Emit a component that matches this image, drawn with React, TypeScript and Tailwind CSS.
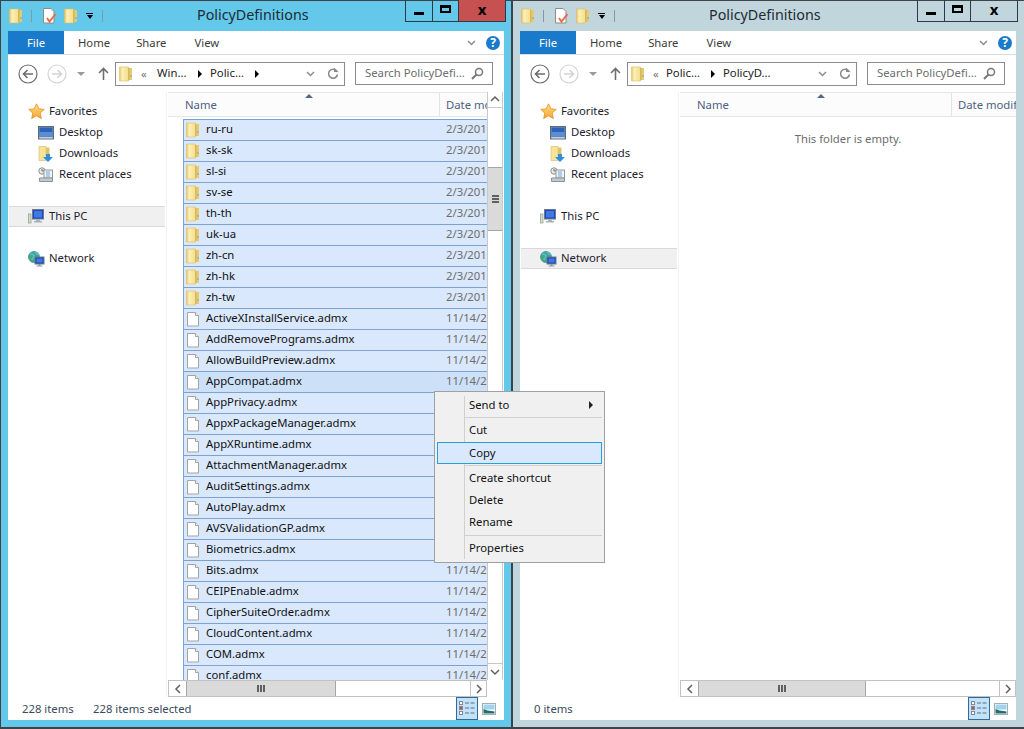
import type { ReactNode } from 'react'

const folderRows = ['ru-ru', 'sk-sk', 'sl-si', 'sv-se', 'th-th', 'uk-ua', 'zh-cn', 'zh-hk', 'zh-tw']
const fileRows = [
  'ActiveXInstallService.admx',
  'AddRemovePrograms.admx',
  'AllowBuildPreview.admx',
  'AppCompat.admx',
  'AppPrivacy.admx',
  'AppxPackageManager.admx',
  'AppXRuntime.admx',
  'AttachmentManager.admx',
  'AuditSettings.admx',
  'AutoPlay.admx',
  'AVSValidationGP.admx',
  'Biometrics.admx',
  'Bits.admx',
  'CEIPEnable.admx',
  'CipherSuiteOrder.admx',
  'CloudContent.admx',
  'COM.admx',
  'conf.admx',
]

function FolderIcon() {
  return (
    <svg width="16" height="16" viewBox="0 0 16 16" className="shrink-0">
      <defs>
        <linearGradient id="folderFace" x1="0" y1="0" x2="1" y2="0">
          <stop offset="0" stopColor="#e6c768" />
          <stop offset="0.3" stopColor="#fbf0b8" />
          <stop offset="1" stopColor="#f5dd8a" />
        </linearGradient>
      </defs>
      <path d="M0.5 1h9v14h-9z" fill="url(#folderFace)" stroke="#dcbd68" strokeWidth="0.6" />
      <path d="M9.500 2h3.500v12h-3.500z" fill="#e8ca6e" />
      <path d="M9.500 2h0.800v12h-0.800z" fill="#c9a440" />
      <rect x="11.500" y="9" width="1" height="2" fill="#5aa8e0" />
    </svg>
  )
}

function FileIcon() {
  return (
    <svg width="16" height="16" viewBox="0 0 16 16" className="shrink-0">
      <path d="M1.500 1.500h8l3 3v10.500h-11z" fill="#fff" stroke="#a3a3a3" />
      <path d="M9.500 1.500v3h3" fill="#f4f4f4" stroke="#a3a3a3" />
    </svg>
  )
}

function StarIcon() {
  return (
    <svg width="17" height="17" viewBox="0 0 17 17">
      <defs>
        <linearGradient id="starFill" x1="0" y1="0" x2="0" y2="1">
          <stop offset="0" stopColor="#ffe27a" />
          <stop offset="1" stopColor="#f8a33a" />
        </linearGradient>
      </defs>
      <path d="M8.500 0.800l2.300 5 5.400 0.600-4 3.700 1.100 5.400-4.800-2.700-4.800 2.700 1.100-5.400-4-3.700 5.400-0.600z" fill="url(#starFill)" stroke="#e58a2b" strokeWidth="0.8" />
    </svg>
  )
}

function DesktopIcon() {
  return (
    <svg width="16" height="14" viewBox="0 0 16 14">
      <rect x="0.500" y="0.500" width="15" height="12.500" fill="#8a9aad" stroke="#5d6d80" />
      <rect x="1.500" y="1.500" width="13" height="9" fill="#2f62b4" />
      <rect x="1.500" y="6" width="13" height="4.500" fill="#5a8fd6" />
      <rect x="1.500" y="11" width="13" height="1.500" fill="#c3ccd6" />
    </svg>
  )
}

function DownloadsIcon() {
  return (
    <svg width="16" height="16" viewBox="0 0 16 16">
      <path d="M1 0.500h7v14h-7z" fill="#f5e49d" stroke="#d9b860" strokeWidth="0.6" />
      <path d="M8 1.500h3.500v7h-3.500z" fill="#e3c262" />
      <path d="M8 8h4v3h3l-5 5-5-5h3z" fill="#2f8fdc" />
    </svg>
  )
}

function RecentIcon() {
  return (
    <svg width="16" height="16" viewBox="0 0 16 16">
      <circle cx="4" cy="4" r="3.200" fill="#e8e8e8" stroke="#8d8d8d" />
      <path d="M4 2v2h2" fill="none" stroke="#555" strokeWidth="0.8" />
      <rect x="6" y="3" width="8.500" height="8" fill="#f1f5f8" stroke="#8e9aa3" />
      <path d="M8 5h4M8 7h4M8 9h4" stroke="#6fa5cf" />
      <path d="M1.500 11h13v3.500h-13z" fill="#c6cbce" stroke="#8b9194" />
    </svg>
  )
}

function PcIcon() {
  return (
    <svg width="16" height="15" viewBox="0 0 16 15">
      <rect x="0.500" y="5" width="2.500" height="9" fill="#d5dcc8" stroke="#8e9a86" strokeWidth="0.7" />
      <rect x="4.500" y="0.500" width="11" height="9.500" fill="#1d46b8" stroke="#6f7b88" />
      <rect x="6" y="2" width="8" height="6.500" fill="#3f78e8" />
      <path d="M8 10.500h4v1.500h2v1.500h-8v-1.500h2z" fill="#a9b2ba" />
    </svg>
  )
}

function NetworkIcon() {
  return (
    <svg width="17" height="16" viewBox="0 0 17 16">
      <circle cx="6" cy="6" r="5.500" fill="#3fae6c" stroke="#2b7fa8" strokeWidth="0.7" />
      <path d="M2 3.500c2-1 3-.5 4 1s-2 3-2 4.500M7 1c1 1.500 3 2 4 3" stroke="#5cb6ea" strokeWidth="1.600" fill="none" />
      <rect x="7" y="6" width="9" height="7" fill="#1d46b8" stroke="#6f7b88" />
      <rect x="8.500" y="7.500" width="6" height="4" fill="#3f78e8" />
      <path d="M10.500 13h2v1.500h2v1h-6v-1h2z" fill="#8d98a2" />
    </svg>
  )
}

function PageCheckIcon() {
  return (
    <svg width="16" height="16" viewBox="0 0 16 16">
      <path d="M1.500 0.500h7.500l3 3v11.500h-10.500z" fill="#fff" stroke="#8c8c8c" />
      <path d="M5 10l2.500 3.500 6-7.500" fill="none" stroke="#e2714a" strokeWidth="2" />
    </svg>
  )
}

function CircleArrow({ dim, flip }: { dim?: boolean; flip?: boolean }) {
  const colour = dim ? '#d4d4d4' : '#6e6e6e'
  return (
    <svg width="20" height="20" viewBox="0 0 20 20" className={flip ? '-scale-x-100' : ''}>
      <circle cx="10" cy="10" r="9" fill="#fff" stroke={colour} strokeWidth="1.200" />
      <path d="M15 10H6M9.500 6L5.500 10l4 4" fill="none" stroke={colour} strokeWidth="1.600" />
    </svg>
  )
}

function MagnifierIcon() {
  return (
    <svg width="13" height="13" viewBox="0 0 13 13">
      <circle cx="8" cy="5" r="3.500" fill="none" stroke="#777" strokeWidth="1.500" />
      <path d="M5.500 7.500L1 12" stroke="#777" strokeWidth="2" />
    </svg>
  )
}

function SmallChevron() {
  return (
    <svg width="9" height="6" viewBox="0 0 9 6">
      <path d="M1 1l3.500 3.500L8 1" fill="none" stroke="#8c8c8c" strokeWidth="1.500" />
    </svg>
  )
}

function RefreshIcon() {
  return (
    <svg width="12" height="13" viewBox="0 0 12 13">
      <path d="M9.800 4.200A4.500 4.500 0 1 0 10.500 7.500" fill="none" stroke="#8a8a8a" strokeWidth="1.600" />
      <path d="M7 0.500v4.500h4.500z" fill="#8a8a8a" />
    </svg>
  )
}

function Crumb() {
  return <span className="block h-0 w-0 shrink-0 border-y-[4px] border-l-[4px] border-y-transparent border-l-black" />
}

function ScrollArrow({ dir }: { dir: 'up' | 'down' | 'left' | 'right' }) {
  const d = {
    up: 'M1 6l4-4 4 4',
    down: 'M1 3l4 4 4-4',
    left: 'M7 1L3 5l4 4',
    right: 'M3 1l4 4-4 4',
  }[dir]
  return (
    <svg width="10" height="10" viewBox="0 0 10 10">
      <path d={d} fill="none" stroke="#606060" strokeWidth="1.500" />
    </svg>
  )
}

function ThumbGrip({ vertical }: { vertical?: boolean }) {
  const bar = vertical ? 'h-[2px] w-[7px] bg-[#606060]' : 'h-[7px] w-[2px] bg-[#606060]'
  return (
    <div className={vertical ? 'flex flex-col gap-[1px]' : 'flex gap-[1px]'}>
      <span className={bar} />
      <span className={bar} />
      <span className={bar} />
    </div>
  )
}

function NavItem({ icon, label, indent, active }: { icon: ReactNode; label: string; indent?: boolean; active?: boolean }) {
  return (
    <div
      className={`mx-px flex h-[21px] w-[156px] items-center border-y ${
        active ? 'border-[#d9d9d9] bg-[#f0f0f0]' : 'border-transparent'
      } ${indent ? 'pl-[29px]' : 'pl-[19px]'}`}
    >
      <div className="flex w-[21px] shrink-0 items-center">{icon}</div>
      <span className="pb-px text-[#1c1c2e]">{label}</span>
    </div>
  )
}

function Row({ name, date, folder, hot }: { name: string; date: string; folder?: boolean; hot?: boolean }) {
  return (
    <div className={`flex h-[21px] shrink-0 items-center border-l border-t border-[#7da2ce] ${hot ? 'bg-[#cce0f8]' : 'bg-[#d9e8fc]'}`}>
      <div className="flex w-[262px] shrink-0 items-center pl-[2px]">
        {folder ? <FolderIcon /> : <FileIcon />}
        <span className="ml-[4px] pb-[2px] text-[#111]">{name}</span>
      </div>
      <span className="whitespace-nowrap pb-[2px] text-[#6d6d6d]">{date}</span>
    </div>
  )
}

function ViewToggles() {
  return (
    <div className="ml-auto flex h-[23px] items-center">
      <div className="flex h-[23px] w-[22px] items-center justify-center border border-[#2f6a9c] bg-[#c4e2f7]">
        <svg width="16" height="15" viewBox="0 0 16 15">
          <rect x="0.500" y="0.500" width="3" height="3" fill="#fff" stroke="#7a8a96" />
          <rect x="0.500" y="5.500" width="3" height="3" fill="#e04a3a" stroke="#7a8a96" />
          <rect x="0.500" y="10.500" width="3" height="3" fill="#fff" stroke="#7a8a96" />
          <path d="M6 2h4M11.500 2h4M6 7h4M11.500 7h4M6 12h4M11.500 12h4" stroke="#5a6f80" />
        </svg>
      </div>
      <div className="ml-[4px] mr-[8px] flex items-center">
        <svg width="14" height="12" viewBox="0 0 14 12">
          <rect x="0.500" y="0.500" width="13" height="11" fill="#fff" stroke="#a3adb5" />
          <rect x="1.500" y="1.500" width="11" height="5" fill="#9fd3ee" />
          <path d="M1.500 10.500V6l4 1.500 7 1v2z" fill="#1f6e6a" />
        </svg>
      </div>
    </div>
  )
}

type ExplorerProps = {
  frame: string
  closeBg: string
  activeNav: 'pc' | 'network'
  crumbs: [string, string]
  crumbGap: string
  crumbWidth: string
  count: string
  selected?: string
  children: ReactNode
  scrollbar?: boolean
  thumb: string
}

function Explorer(props: ExplorerProps) {
  const { frame, closeBg, activeNav, crumbs, crumbGap, crumbWidth, count, selected, children, scrollbar, thumb } = props

  return (
    <div className={`flex h-[729px] w-[512px] flex-col border-y border-l border-[#3d4347] border-b-2 pl-[7px] ${frame} ${scrollbar ? 'border-r' : ''}`}>
      <div className="flex h-[30px] w-[496px] shrink-0 items-start">
        <div className="flex h-[30px] w-[100px] items-center">
          <div className="ml-px flex w-[16px] justify-center"><FolderIcon /></div>
          <span className="ml-[6px] h-[12px] w-px bg-[#7f9aa6]" />
          <div className="ml-[10px]"><PageCheckIcon /></div>
          <div className="ml-[6px]"><FolderIcon /></div>
          <div className="ml-[6px] flex w-[7px] flex-col items-center gap-[1px]">
            <span className="h-px w-[7px] bg-black" />
            <span className="h-0 w-0 border-x-[3.500px] border-t-[4px] border-x-transparent border-t-black" />
          </div>
          <span className="ml-[9px] h-[12px] w-px bg-[#7f9aa6]" />
        </div>
        <div className="ml-[89px] pt-[3px] text-[14.3px] leading-[22px] text-[#1d2b33]">PolicyDefinitions</div>
        <div className="-mr-[2px] -mt-px ml-auto flex h-[22px] border border-t-0 border-[#2b3a44]">
          <div className="flex w-[27px] items-center justify-center border-r border-[#2b3a44] pt-[5px]">
            <span className="h-[3px] w-[10px] bg-black" />
          </div>
          <div className="flex w-[26px] items-center justify-center border-r border-[#2b3a44] pb-[3px]">
            <span className="h-[8px] w-[11px] border-2 border-t-[3px] border-black" />
          </div>
          <div className={`flex w-[46px] items-center justify-center pb-[3px] text-[15px] font-bold text-black ${closeBg}`}>x</div>
        </div>
      </div>

      <div className="flex h-[689px] w-[496px] shrink-0 flex-col bg-white">
        <div className="flex h-[24px] shrink-0 border-b border-[#dadbdc]">
          <div className="flex h-[23px] w-[56px] items-center justify-center bg-[#1979ca] text-white">File</div>
          <div className="ml-[14px] flex h-[23px] items-center text-[#3b3b3b]">Home</div>
          <div className="ml-[26px] flex h-[23px] items-center text-[#3b3b3b]">Share</div>
          <div className="ml-[28px] flex h-[23px] items-center text-[#3b3b3b]">View</div>
          <div className="ml-auto flex h-[23px] items-center pr-[4px]">
            <SmallChevron />
            <div className="ml-[10px] flex h-[14px] w-[14px] items-center justify-center rounded-full bg-[#1979ca] text-[12px] font-bold text-white">?</div>
          </div>
        </div>

        <div className="flex h-[37px] shrink-0 items-center">
          <div className="ml-[10px]"><CircleArrow /></div>
          <div className="ml-[9px]"><CircleArrow dim flip /></div>
          <span className="ml-[10px] h-0 w-0 border-x-[4px] border-t-[4px] border-x-transparent border-t-[#9a9a9a]" />
          <svg width="11" height="13" viewBox="0 0 11 13" className="ml-[13px]">
            <path d="M5.500 13V2M1 6l4.500-4.500L10 6" fill="none" stroke="#6e6e6e" strokeWidth="1.600" />
          </svg>
          <div className="ml-[6px] flex h-[24px] w-[230px] items-center border border-[#8c8c8c] pl-[3px]">
            <FolderIcon />
            <span className="ml-[6px] w-[6px] text-[#777]">«</span>
            <span className={`shrink-0 whitespace-nowrap pb-px text-[#222] ${crumbGap} ${crumbWidth}`}>{crumbs[0]}</span>
            <Crumb />
            <span className="ml-[8px] w-[45px] shrink-0 whitespace-nowrap pb-px text-[#222]">{crumbs[1]}</span>
            {scrollbar && <Crumb />}
            <div className="ml-auto flex items-center pr-[5px]">
              <SmallChevron />
              <span className="ml-[12px] flex"><RefreshIcon /></span>
            </div>
          </div>
          <div className="ml-[10px] flex h-[23px] w-[138px] items-center justify-between border border-[#8c8c8c] pl-[9px] pr-[8px]">
            <span className="pb-px text-[#6d6d6d]">Search PolicyDefi...</span>
            <MagnifierIcon />
          </div>
        </div>

        <div className="flex min-h-0 flex-1">
          <div className="flex w-[159px] shrink-0 flex-col border-r border-[#f2f2f2] pt-[9px]">
            <NavItem icon={<StarIcon />} label="Favorites" />
            <NavItem indent icon={<DesktopIcon />} label="Desktop" />
            <NavItem indent icon={<DownloadsIcon />} label="Downloads" />
            <NavItem indent icon={<RecentIcon />} label="Recent places" />
            <div className="mt-[21px]"><NavItem active={activeNav === 'pc'} icon={<PcIcon />} label="This PC" /></div>
            <div className="mt-[21px]"><NavItem active={activeNav === 'network'} icon={<NetworkIcon />} label="Network" /></div>
          </div>

          <div className="relative flex w-[337px] shrink-0 flex-col pl-px">
            <div className="flex h-[588px] shrink-0">
              <div className="flex min-w-0 flex-1 flex-col">
                <div className="relative flex h-[25px] shrink-0 overflow-hidden border-y border-[#e6e6e6] bg-[#fcfcfc] text-[#4d6082]">
                  <div className="flex w-[272px] shrink-0 items-center border-r border-[#e3e3e3] pl-[17px]">Name</div>
                  <div className="flex items-center whitespace-nowrap pl-[6px]">Date modified</div>
                  <span className="absolute left-[137px] top-px h-0 w-0 border-x-[4px] border-b-[4px] border-x-transparent border-b-[#54677e]" />
                </div>
                <div className="min-h-0 flex-1 overflow-hidden">{children}</div>
              </div>
              {scrollbar && (
                <div className="mr-px flex w-[16px] shrink-0 flex-col border-x border-[#c9c9c9]">
                  <div className="flex h-[16px] shrink-0 items-center justify-center border-b border-[#c9c9c9]"><ScrollArrow dir="up" /></div>
                  <div className="mt-[59px] flex h-[64px] shrink-0 items-center justify-center border-y border-[#a6a6a6] bg-[#dadada]">
                    <ThumbGrip vertical />
                  </div>
                  <div className="mt-auto flex h-[17px] shrink-0 items-center justify-center border-t border-[#c9c9c9]"><ScrollArrow dir="down" /></div>
                </div>
              )}
            </div>
            <div className={`flex h-[17px] shrink-0 border border-[#c2c2c2] ${scrollbar ? 'mr-[17px]' : ''}`}>
              <div className="flex w-[17px] shrink-0 items-center justify-center"><ScrollArrow dir="left" /></div>
              <div className={`flex shrink-0 items-center justify-center border-x border-[#a6a6a6] bg-[#dadada] ${thumb}`}>
                <ThumbGrip />
              </div>
              <div className="ml-auto flex w-[16px] shrink-0 items-center justify-center border-l border-[#c2c2c2]"><ScrollArrow dir="right" /></div>
            </div>
          </div>
        </div>

        <div className="flex h-[23px] shrink-0 items-center text-[#3a4a5c]">
          <span className="ml-[14px] w-[60px]">{count}</span>
          {selected && <span className="ml-[11px] w-[106px]">{selected}</span>}
          <ViewToggles />
        </div>
      </div>
    </div>
  )
}

export default function App() {
  return (
    <div className="relative flex h-[729px] w-[1024px] overflow-hidden bg-[#3d4347] font-['Noto_Sans',sans-serif] text-[11.3px] leading-[16px]">
      <Explorer
        frame="bg-[#63c8ea]"
        closeBg="bg-[#c75050]"
        activeNav="pc"
        crumbs={['Win...', 'Polic...']}
        crumbGap="ml-[10px]"
        crumbWidth="w-[41px]"
        count="228 items"
        selected="228 items selected"
        scrollbar
        thumb="w-[150px]"
      >
        <div className="flex flex-col pl-[15px] pt-[2px]">
          {folderRows.map((name) => (
            <Row key={name} folder name={name} date="2/3/2016" />
          ))}
          {fileRows.map((name) => (
            <Row key={name} name={name} date="11/14/2016" hot={name === 'AppCompat.admx'} />
          ))}
        </div>
      </Explorer>

      <Explorer
        frame="bg-[#c1d5dc]"
        closeBg=""
        activeNav="network"
        crumbs={['Polic...', 'PolicyD...']}
        crumbGap="ml-[7px]"
        crumbWidth="w-[45px]"
        count="0 items"
        thumb="w-[168px]"
      >
        <div className="pt-[14px] text-center text-[#6d6d6d]">This folder is empty.</div>
      </Explorer>

      <div className="absolute left-[434px] top-[391px] h-[172px] w-[171px] border border-[#a0a0a0] bg-[#f0f0f0] pt-px text-[#111]">
        <span className="absolute bottom-[3px] left-[29px] top-[4px] w-px bg-[#d0d0d0]" />
        <div className="flex h-[22px] items-center pl-[34px] pr-[11px] pt-px">
          <span>Send to</span>
          <span className="ml-auto h-0 w-0 border-y-[4px] border-l-[4px] border-y-transparent border-l-[#222]" />
        </div>
        <div className="flex h-[4px] items-center pl-[30px] pr-[2px]"><span className="h-px w-full bg-[#d0d0d0]" /></div>
        <div className="flex h-[22px] items-center pl-[34px]">Cut</div>
        <div className="relative z-10 mx-[2px] mt-px flex h-[22px] items-center border border-[#26a0da] bg-[#d9e8fc] pl-[31px]">Copy</div>
        <div className="flex h-[3px] items-center pl-[30px] pr-[2px]"><span className="h-px w-full bg-[#d0d0d0]" /></div>
        <div className="flex h-[22px] items-center pl-[34px]">Create shortcut</div>
        <div className="flex h-[22px] items-center pl-[34px]">Delete</div>
        <div className="flex h-[22px] items-center pl-[34px]">Rename</div>
        <div className="flex h-[4px] items-center pl-[30px] pr-[2px]"><span className="h-px w-full bg-[#d0d0d0]" /></div>
        <div className="flex h-[22px] items-center pl-[34px]">Properties</div>
      </div>
    </div>
  )
}
